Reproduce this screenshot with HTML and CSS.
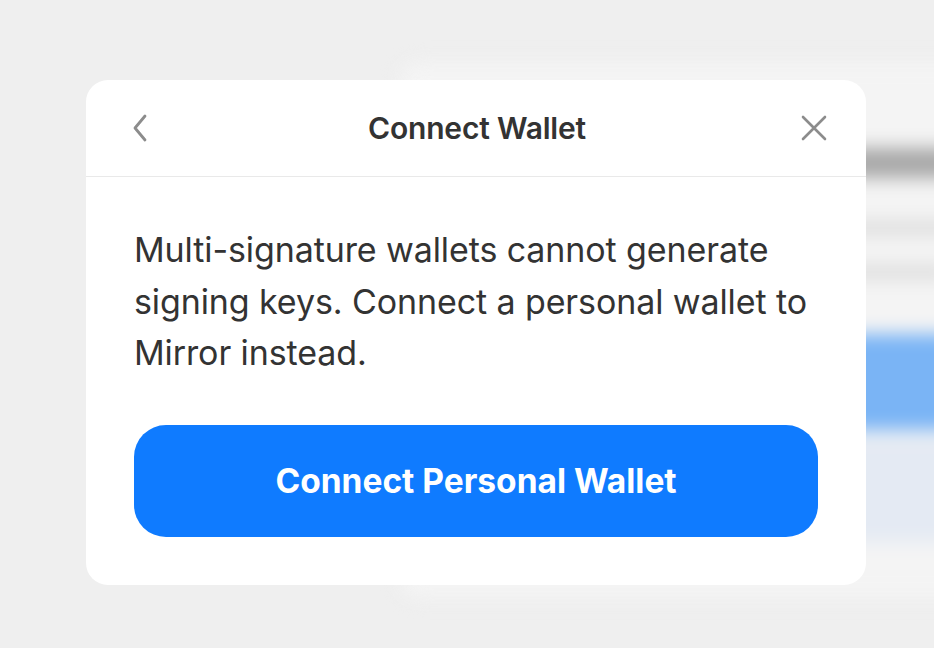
FILE: index.html
```html
<!DOCTYPE html>
<html lang="en">
<head>
<meta charset="utf-8">
<title>Connect Wallet</title>
<link rel="stylesheet" href="styles.css">
</head>
<body>
<div class="stage">
  <div class="page" aria-hidden="true">
    <div class="page-card">
      <div class="sk-heading"></div>
      <div class="sk-line sk-line-1"></div>
      <div class="sk-line sk-line-2"></div>
      <div class="sk-button"></div>
      <div class="sk-panel"></div>
    </div>
  </div>
  <div class="modal-layer">
    <div class="modal" role="dialog" aria-labelledby="modal-title">
      <div class="modal-header">
        <button class="icon-btn" aria-label="Back">
          <svg width="18" height="28" viewBox="0 0 18 28" fill="none" stroke="#8c8c8c" stroke-width="2.8" stroke-linecap="round" stroke-linejoin="round"><path d="M14 2 L4 14 L14 26"/></svg>
        </button>
        <h2 id="modal-title" class="modal-title">Connect Wallet</h2>
        <button class="icon-btn" aria-label="Close">
          <svg width="28" height="28" viewBox="0 0 28 28" fill="none" stroke="#8c8c8c" stroke-width="2.6" stroke-linecap="round"><path d="M3 3 L25 25 M25 3 L3 25"/></svg>
        </button>
      </div>
      <div class="modal-body">
        <p class="modal-text">Multi-signature wallets cannot generate signing keys. Connect a personal wallet to Mirror instead.</p>
        <button class="primary-btn">Connect Personal Wallet</button>
      </div>
    </div>
  </div>
</div>
</body>
</html>
```

FILE: styles.css
```css
* { box-sizing: border-box; }

html, body {
  margin: 0;
  padding: 0;
}

body {
  width: 934px;
  height: 648px;
  overflow: hidden;
  background: #efefef;
  font-family: Inter, "Noto Sans", "Liberation Sans", sans-serif;
}

.stage {
  display: grid;
  width: 934px;
  height: 648px;
}

.page,
.modal-layer {
  grid-area: 1 / 1;
}

.page {
  padding: 62px 0 0 400px;
  overflow: hidden;
}

.page-card {
  width: 600px;
  height: 536px;
  background: #f4f4f4;
  border-radius: 20px;
  filter: blur(9px);
  display: flex;
  flex-direction: column;
  padding: 86px 0 0 30px;
}

.sk-heading {
  height: 30px;
  width: 560px;
  background: #a8a8a8;
  border-radius: 6px;
}

.sk-line {
  height: 12px;
  background: #d9d9d9;
  border-radius: 6px;
}

.sk-line-1 { width: 540px; margin-top: 44px; }
.sk-line-2 { width: 520px; margin-top: 32px; }

.sk-button {
  margin-top: 56px;
  height: 96px;
  width: 560px;
  background: #7ab4f5;
  border-radius: 20px;
}

.sk-panel {
  margin-top: 8px;
  height: 104px;
  width: 560px;
  background: #e4eaf3;
  border-radius: 8px;
}

.modal-layer {
  position: relative;
  z-index: 1;
  padding: 80px 0 0 86px;
}

.modal {
  width: 780px;
  background: #ffffff;
  border-radius: 22px;
  overflow: hidden;
}

.modal-header {
  height: 97px;
  border-bottom: 1px solid #e9e9e9;
  display: flex;
  align-items: center;
  justify-content: space-between;
  padding: 0 38px 0 40px;
}

.icon-btn {
  border: 0;
  background: none;
  padding: 0;
  width: 28px;
  height: 28px;
  display: flex;
  align-items: center;
  justify-content: center;
}

.modal-title {
  margin: 0;
  font-size: 30px;
  font-weight: 600;
  color: #333333;
  letter-spacing: -0.2px;
}

.modal-body {
  padding: 47px 48px 48px;
  display: flex;
  flex-direction: column;
  gap: 46px;
}

.modal-text {
  margin: 0;
  font-size: 34px;
  line-height: 51.5px;
  color: #333333;
  letter-spacing: -0.1px;
}

.primary-btn {
  height: 112px;
  border: 0;
  border-radius: 32px;
  background: #0f7bff;
  color: #ffffff;
  font-family: inherit;
  font-size: 33.5px;
  font-weight: 700;
  letter-spacing: 0;
}
```
